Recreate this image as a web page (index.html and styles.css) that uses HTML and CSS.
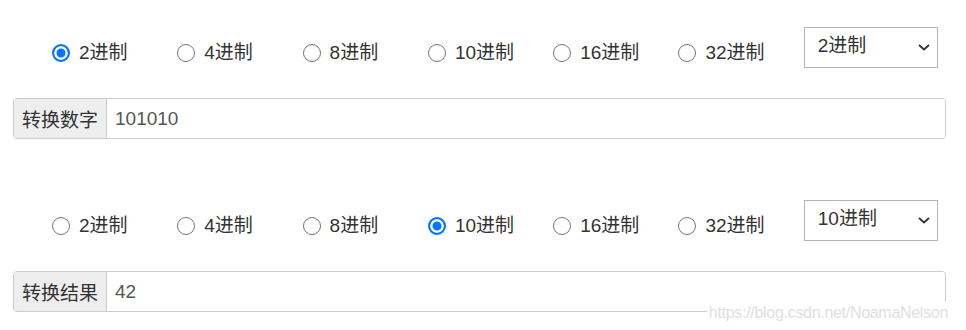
FILE: index.html
```html
<!DOCTYPE html>
<html lang="zh-CN">
<head>
  <meta charset="UTF-8">
  <title>进制转换</title>
  <link rel="stylesheet" href="styles.css">
</head>
<body>
  <div class="container">

    <!-- 输入 -->
    <div class="section section-input">
      <div class="radix-row">
        <label class="radix"><input type="radio" name="from" checked> 2进制</label>
        <label class="radix"><input type="radio" name="from"> 4进制</label>
        <label class="radix"><input type="radio" name="from"> 8进制</label>
        <label class="radix"><input type="radio" name="from"> 10进制</label>
        <label class="radix"><input type="radio" name="from"> 16进制</label>
        <label class="radix"><input type="radio" name="from"> 32进制</label>
        <div class="select-wrap">
          <select class="radix-select">
            <option selected>2进制</option>
            <option>4进制</option>
            <option>8进制</option>
            <option>10进制</option>
            <option>16进制</option>
            <option>32进制</option>
          </select>
          <svg class="chevron" width="12" height="7" viewBox="0 0 12 7"><path d="M1 1l5 4.5L11 1" fill="none" stroke="#333" stroke-width="1.8"/></svg>
        </div>
      </div>
      <div class="input-group">
        <span class="addon">转换数字</span>
        <input class="field" type="text" value="101010">
      </div>
    </div>

    <!-- 结果 -->
    <div class="section">
      <div class="radix-row">
        <label class="radix"><input type="radio" name="to"> 2进制</label>
        <label class="radix"><input type="radio" name="to"> 4进制</label>
        <label class="radix"><input type="radio" name="to"> 8进制</label>
        <label class="radix"><input type="radio" name="to" checked> 10进制</label>
        <label class="radix"><input type="radio" name="to"> 16进制</label>
        <label class="radix"><input type="radio" name="to"> 32进制</label>
        <div class="select-wrap">
          <select class="radix-select">
            <option>2进制</option>
            <option>4进制</option>
            <option>8进制</option>
            <option selected>10进制</option>
            <option>16进制</option>
            <option>32进制</option>
          </select>
          <svg class="chevron" width="12" height="7" viewBox="0 0 12 7"><path d="M1 1l5 4.5L11 1" fill="none" stroke="#333" stroke-width="1.8"/></svg>
        </div>
      </div>
      <div class="input-group">
        <span class="addon">转换结果</span>
        <input class="field" type="text" value="42">
      </div>
    </div>

  </div>
  <div class="watermark">https://blog.csdn.net/NoamaNelson</div>
</body>
</html>
```

FILE: styles.css
```css
* {
    box-sizing: border-box;
}
html, body {
    margin: 0;
    padding: 0;
    background: #fff;
}
body {
    font-family: "Liberation Sans", "Noto Sans CJK SC", sans-serif;
    font-size: 19px;
    color: #333;
    position: relative;
    height: 330px;
    overflow: hidden;
}
.container {
    padding: 27px 20px 0 13px;
}
.section-input {
    margin-bottom: 61px;
}
.radix-row {
    display: flex;
    align-items: flex-start;
    height: 41px;
    padding-left: 39px;
}
.radix {
    width: 125.3px;
    display: flex;
    align-items: center;
    gap: 9px;
    margin-top: 16px;
    line-height: 20px;
    white-space: nowrap;
}
.radix input {
    appearance: none;
    -webkit-appearance: none;
    margin: 0;
    width: 18px;
    height: 18px;
    border: 1px solid #767676;
    border-radius: 50%;
    background: #fff;
    flex: none;
}
.radix input:checked {
    border: 2px solid #0075ff;
    background: #0075ff;
    box-shadow: inset 0 0 0 2.5px #fff;
}
.select-wrap {
    position: relative;
    width: 134px;
    height: 41px;
}
.radix-select {
    appearance: none;
    -webkit-appearance: none;
    width: 100%;
    height: 100%;
    border: 1px solid #b5b5b5;
    border-radius: 0;
    background: #fff;
    padding: 0 0 4px 13px;
    font: inherit;
    color: #333;
    outline: none;
}
.chevron {
    position: absolute;
    right: 8px;
    top: 17px;
    pointer-events: none;
}
.input-group {
    display: flex;
    height: 41px;
    margin-top: 30px;
    border: 1px solid #ccc;
    border-radius: 4px;
    overflow: hidden;
}
.addon {
    display: flex;
    align-items: center;
    padding: 0 8px;
    background: #eee;
    border-right: 1px solid #ccc;
    color: #333;
    white-space: nowrap;
}
.field {
    flex: 1;
    border: none;
    padding: 0 8px;
    font: inherit;
    color: #555;
    outline: none;
}
.watermark {
    position: absolute;
    right: 16px;
    top: 302px;
    padding: 0 2px;
    background: #fff;
    font-size: 16px;
    letter-spacing: -0.3px;
    line-height: 22px;
    color: #e0e0e0;
}
```
